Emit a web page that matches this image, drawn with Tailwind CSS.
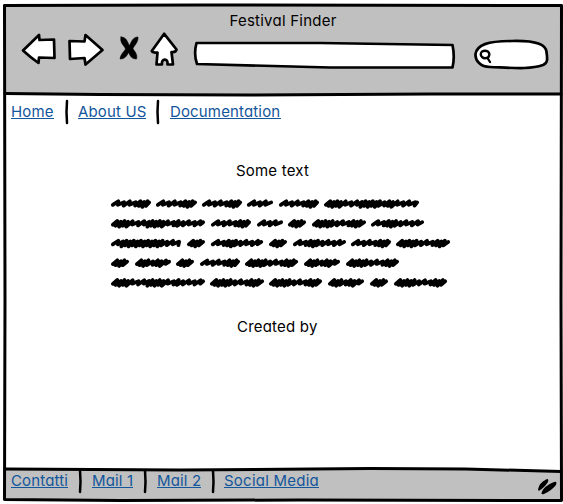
<!DOCTYPE html>
<html lang="en">
<head>
<meta charset="utf-8">
<title>Festival Finder</title>
<script src="https://cdn.jsdelivr.net/npm/@tailwindcss/browser@4"></script>
</head>
<body class="bg-white">
<div class="relative flex h-[504px] w-[563px] flex-col overflow-hidden font-['Inter','Noto_Sans',sans-serif] text-[15px] leading-5 tracking-[0.15px] text-black [font-feature-settings:'cv11']">
  <!-- hand-drawn window frame -->
  <svg class="absolute inset-0 -z-10" width="563" height="504" viewBox="0 0 563 504" fill="none">
    <path d="M5 5.500H561V94.500L430 94L220 95L5 94Z" fill="#c0c0c0"/>
    <path d="M5 469.500L180 470L370 468.500L465 469L561 471.500V500L240 500.500L5 499.500Z" fill="#c0c0c0"/>
    <g stroke="#000" stroke-width="3" stroke-linejoin="round" stroke-linecap="round">
      <path d="M4.500 5.500L200 5L561.500 5.500L561 300L561.500 500.500L300 500L120 500.500L4.500 499.500L5 300Z"/>
      <path d="M5 93.500L100 94.500L250 95L430 94L561 94"/>
      <path d="M5 469L180 470L370 468.500L465 469L561 471.500"/>
    </g>
  </svg>

  <header class="flex h-[95px] shrink-0 flex-col pt-[11px]">
    <h1 class="pl-[229.500px] tracking-[0.23px] whitespace-nowrap">Festival Finder</h1>
    <svg class="-mt-px" width="563" height="40" viewBox="0 30 563 40" fill="#fff" stroke="#000" stroke-width="2.700" stroke-linejoin="round" stroke-linecap="round">
      <path d="M23 50.500L39 35L39.500 40L54 39.500L54.500 58L39 57.500L38.500 63Q30 57 23 50.500Z"/>
      <path d="M69.500 41L84.500 41.500L85.500 35L102.500 50L85.500 64.500L84.500 58L70 59Z"/>
      <path d="M121 37C127 37 127.500 43 129.500 45.500C131.500 41.500 133 37 138 37C138.500 42 134 46 133 48.500C134 51 138 54 136.500 59C131 59 130 55 128.500 52.500C127 55.500 125 59 120 59C120.500 54 124.500 51.500 125.500 49C124 45 119.500 43 121 37Z" fill="#000" stroke-width=".6"/>
      <path d="M164.200 33.800L176.500 49.500Q176 52.500 171.500 52L173 64.500H167.500Q168 59.500 164.500 59.700Q161.500 60 162 64.500H156.500L157.500 52.500Q152.500 53 151.800 51Z"/>
      <path d="M196.500 43L320 43L452.500 45Q455 57 452.500 67.500L330 67.500L197 64Q193.500 54 196.500 43Z"/>
      <path d="M490 67C480 67 475 60 475.500 54C477 45 487 41 512 41C532 40.500 546 43 546.500 52C547.500 59 548 63 543 65C530 69.500 515 68 490 67Z"/>
      <path d="M482 51.500Q485 50 488 51.500Q490.500 54 488.500 57Q485 59.500 482 57Q479.500 54 482 51.500ZM487.500 58L490 62" stroke-width="2.300"/>
    </svg>
  </header>

  <nav class="flex h-[35px] shrink-0 items-start pt-[6px] leading-[22px] text-[#12569b]">
    <a class="ml-[11px] h-[18px] w-[43px] border-b border-[#12569b] whitespace-nowrap">Home</a>
    <svg class="-mt-[2px] ml-[11px]" width="4" height="27"><path d="M2 2L1.500 13L2 24" fill="none" stroke="#000" stroke-width="2.500" stroke-linecap="round"/></svg>
    <a class="ml-[9px] h-[18px] w-[68px] border-b border-[#12569b] whitespace-nowrap">About US</a>
    <svg class="-mt-[2px] ml-[10px]" width="4" height="27"><path d="M2 2L1.500 13L2 24" fill="none" stroke="#000" stroke-width="2.500" stroke-linecap="round"/></svg>
    <a class="ml-[10px] h-[18px] w-[111px] border-b border-[#12569b] whitespace-nowrap">Documentation</a>
  </nav>

  <main class="flex h-[338px] shrink-0 flex-col pt-[31px]">
    <h2 class="pl-[236px] tracking-[0.2px] whitespace-nowrap">Some text</h2>
    <svg class="mt-[13px] ml-[105px]" width="355" height="104" viewBox="105 194 355 104" fill="none" stroke="#000" stroke-width="3.700" stroke-linecap="round" stroke-linejoin="round" id="scribble"></svg>
    <p class="mt-[19px] pl-[237px] tracking-[0.2px] whitespace-nowrap">Created by</p>
  </main>

  <footer class="flex h-[36px] shrink-0 items-start pt-[2px] leading-[19px] text-[#12569b]">
    <a class="mt-[1px] ml-[11px] h-[17px] w-[57px] border-b border-[#12569b] whitespace-nowrap">Contatti</a>
    <svg class="ml-[10px]" width="4" height="26"><path d="M2 0L2.500 12L2 22" fill="none" stroke="#000" stroke-width="2.500" stroke-linecap="round"/></svg>
    <a class="mt-[1px] ml-[10px] h-[17px] w-[41px] border-b border-[#12569b] whitespace-nowrap">Mail 1</a>
    <svg class="ml-[10px]" width="4" height="26"><path d="M2 0L2.500 12L2 22" fill="none" stroke="#000" stroke-width="2.500" stroke-linecap="round"/></svg>
    <a class="mt-[1px] ml-[10px] h-[17px] w-[44px] border-b border-[#12569b] whitespace-nowrap">Mail 2</a>
    <svg class="ml-[10px]" width="4" height="26"><path d="M2 0L2.500 12L2 22" fill="none" stroke="#000" stroke-width="2.500" stroke-linecap="round"/></svg>
    <a class="mt-[1px] ml-[9px] h-[17px] w-[95px] border-b border-[#12569b] tracking-[0.23px] whitespace-nowrap">Social Media</a>
    <svg class="mt-[7px] ml-[217px] shrink-0" width="22" height="20" viewBox="536 478 22 20"><path d="M538 490.500Q539 484 546 480.500Q549 479 548 483Q544 489 539.500 491.500Q538 492 538 490.500ZM541.500 494Q543.500 487 554 483Q557.500 482 556 486Q551 492 544 495Q541.500 496 541.500 494Z"/></svg>
  </footer>
</div>
<script>
// Scribbled words: left, right, then the dense stretches as fractions of the word
var A = [[.55, .9]], B = [], C = [[0, .6]], D = [[0, .3], [.68, 1]], E = [[.22, .42]], F = [[0, .25], [.42, .7]],
    G = [[0, .15], [.32, .55], [.62, .7]], H = [[.05, .7]];
var rows = [
  [203.700, [111,151,A],[156,197,A],[202,242,A],[247,273,B],[279,319,A],[324,419,G]],
  [223.500, [111,205,G],[211,251,A],[257,283,B],[288,306,C],[312,366,D],[371,424,E]],
  [243.200, [111,181,H],[187,205,C],[211,263,E],[269,287,C],[293,346,E],[351,391,A],[396,450,D]],
  [262.900, [111,129,C],[135,171,F],[176,194,C],[200,240,A],[245,298,D],[304,340,F],[346,399,D]],
  [282.600, [111,205,G],[210,264,D],[269,322,D],[328,364,F],[370,388,C],[394,447,D]]
];
var out = '';
rows.forEach(function (row) {
  var y = row[0];
  row.slice(1).forEach(function (w) {
    var a = w[0] + 1.800, b = w[1] - 1.800, x = a, n = 0, d = 'M' + a + ' ' + (y + 1.200);
    while (x < b - 5) {
      var f = (x - a) / (b - a), dense = w[2].some(function (s) { return f >= s[0] && f < s[1]; });
      var top = dense ? 2.200 : 2, low = dense ? 2.700 : 1.500, wob = n % 2 ? .5 : -.4;
      d += 'L' + (x + (dense ? 4.500 : 5.500)) + ' ' + (y - top + wob) + 'L' + (x + (dense ? 2.700 : 5)) + ' ' + (y + low + wob);
      x += dense ? 3.600 : 5.800; n++;
    }
    d += 'L' + b + ' ' + (y - 1.300);
    out += '<path d="' + d + '"/>';
  });
});
document.getElementById('scribble').innerHTML = out;
</script>
</body>
</html>
